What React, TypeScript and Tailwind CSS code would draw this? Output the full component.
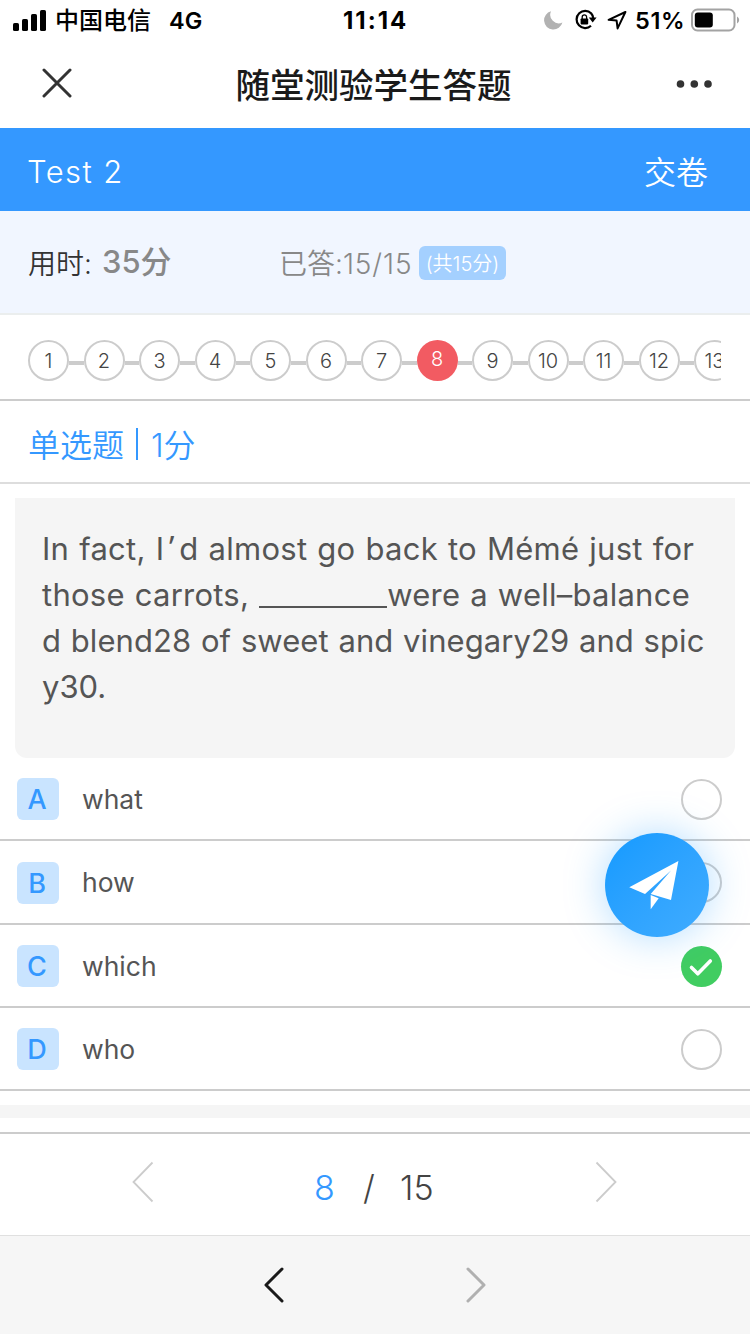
import { useState } from 'react'
import { clsx } from 'clsx'

const TOTAL = 15
const VISIBLE_STEPS = 13

const options = [
  { key: 'A', text: 'what', row: 'h-[83px] pt-5', label: 'leading-[43px]', radio: 'mt-px' },
  { key: 'B', text: 'how', row: 'h-[84px] pt-[21px]', label: 'leading-[41px]', radio: '' },
  { key: 'C', text: 'which', row: 'h-[83px] pt-5', label: 'leading-[43px]', radio: 'mt-px' },
  { key: 'D', text: 'who', row: 'h-[83px] pt-5', label: 'leading-[43px]', radio: 'mt-px' },
]

const questionLines = [
  { before: 'In fact, I', quote: true, text: 'd almost go back to Mémé just for', tracking: 'tracking-[0.27px]' },
  { text: 'those carrots, ', blank: true, rest: 'were a well–balance', tracking: 'tracking-[0.25px]' },
  { text: 'd blend28 of sweet and vinegary29 and spic', tracking: 'tracking-[0.06px]' },
  { text: 'y30.', tracking: 'tracking-[0px]' },
]

function StatusBar() {
  return (
    <div className="flex h-10 items-center text-black">
      <svg className="ml-[13px] h-[21px] w-[33px] shrink-0" viewBox="0 0 33 21">
        <rect x="0" y="13" width="6" height="8" rx="1.6" />
        <rect x="9" y="9" width="6" height="12" rx="1.6" />
        <rect x="18" y="4" width="6" height="17" rx="1.6" />
        <rect x="27" y="0" width="6" height="21" rx="1.6" />
      </svg>
      <span className="mt-0.5 ml-[9px] w-[114px] text-[24px] leading-10 font-medium whitespace-nowrap">中国电信</span>
      <span className="mt-0.5 w-[174px] text-[23.5px] leading-10 font-semibold tracking-[0.2px]">4G</span>
      <span className="mt-0.5 w-[199px] text-[24px] leading-10 font-bold tracking-[2px]">11:14</span>
      <svg className="ml-0.5 h-[19px] w-[19px] shrink-0" viewBox="0 0 19 19">
        <path d="M7 0.3A9.3 9.3 0 1 0 18.4 11.6A8.6 8.6 0 0 1 7 0.3Z" fill="#b2b2b2" />
      </svg>
      <svg className="ml-[11px] h-[22px] w-[23px] shrink-0" viewBox="0 0 23 22">
        <path d="M17.3 4.4A8.6 8.6 0 1 0 17 16.8" fill="none" stroke="#000" strokeWidth="2.2" />
        <path d="M17.1 4.3Q19 6.4 19.2 9" fill="none" stroke="#000" strokeWidth="2.2" />
        <path d="M14.8 8.6H22.6L18.7 13.4Z" />
        <rect x="6.6" y="9.4" width="7.6" height="6" rx="0.8" />
        <path d="M8.2 10V8a2.2 2.2 0 0 1 4.4 0v2" fill="none" stroke="#000" strokeWidth="1.3" />
      </svg>
      <svg className="ml-[10px] h-[20px] w-[20px] shrink-0" viewBox="0 0 20 20">
        <path d="M18.4 2L1.6 9.8L9.6 10.6L10.6 18.4Z" fill="none" stroke="#000" strokeWidth="2" strokeLinejoin="round" />
      </svg>
      <span className="mt-0.5 ml-[8px] w-[56px] text-[23.5px] leading-10 font-semibold tracking-[0.7px] whitespace-nowrap">51%</span>
      <svg className="h-[24px] w-[49px] shrink-0" viewBox="0 0 49 24">
        <rect x="1" y="1.5" width="42.5" height="21" rx="5.5" fill="none" stroke="#a3a3a3" strokeWidth="2" />
        <rect x="3.8" y="4.5" width="18" height="15" rx="3" />
        <path d="M46 8.5Q48.2 9.8 48.2 12T46 15.5Z" fill="#a3a3a3" />
      </svg>
    </div>
  )
}

function NavBar() {
  return (
    <div className="flex h-[88px] items-center justify-between pr-[38px] pl-[42px] text-[#1a1a1a]">
      <svg className="mt-[-2px] h-[30px] w-[30px]" viewBox="0 0 30 30">
        <path d="M2 2L28 28M28 2L2 28" stroke="#333" strokeWidth="3" strokeLinecap="round" />
      </svg>
      <h1 className="mt-[3px] mr-px text-[34.5px] leading-[85px] font-medium">随堂测验学生答题</h1>
      <svg className="mt-[-1px] h-2 w-9" viewBox="0 0 36 8">
        <circle cx="4.5" cy="4" r="3.8" fill="#333" />
        <circle cx="18.3" cy="4" r="3.8" fill="#333" />
        <circle cx="32" cy="4" r="3.8" fill="#333" />
      </svg>
    </div>
  )
}

function Steps({ current }: { current: number }) {
  return (
    <div className="h-[86px] border-b-2 border-[#ccc] px-7 pt-[25px]">
      <div className="flex w-[693px] overflow-hidden">
        {Array.from({ length: VISIBLE_STEPS }, (_, i) => i + 1).map((n) => (
          <div key={n} className="flex w-[55.5px] shrink-0 items-start">
            <div
              className={clsx(
                'flex h-[41px] w-[41px] shrink-0 justify-center rounded-full text-[20px] font-[350]',
                n === current
                  ? 'bg-[#f25b62] leading-[39px] text-white'
                  : 'border-2 border-[#ccc] leading-[38px] text-[#444]'
              )}
            >
              {n}
            </div>
            <div className="mt-[21px] h-1 flex-1 bg-[#ccc]" />
          </div>
        ))}
      </div>
    </div>
  )
}

function Radio({ checked, className }: { checked: boolean; className?: string }) {
  if (!checked) {
    return <span className={clsx('h-[41px] w-[41px] rounded-full border-2 border-[#ccc]', className)} />
  }
  return (
    <span className={clsx('h-[41px] w-[41px] rounded-full bg-[#41cd61]', className)}>
      <svg className="h-[41px] w-[41px]" viewBox="0 0 41 41">
        <path d="M10.5 21.5L16.8 27.8L29.3 15" fill="none" stroke="#fff" strokeWidth="3.6" strokeLinecap="round" strokeLinejoin="round" />
      </svg>
    </span>
  )
}

function SendButton() {
  return (
    <button className="absolute top-[833px] left-[605px] h-[104px] w-[104px] rounded-full bg-linear-to-br from-[#129aff] to-[#40acff] shadow-[0_0_40px_rgba(32,156,255,0.35)]">
      <svg className="h-[104px] w-[104px]" viewBox="0 0 104 104" fill="#fff">
        <path d="M73.4 28L24.3 54.3L40 61L66 37.5L45.7 61L66 67Z" />
        <path d="M45.7 62L53.7 65.3L45.7 76.3Z" />
      </svg>
    </button>
  )
}

function Chevron({ dir, className }: { dir: 'left' | 'right'; className: string }) {
  return (
    <svg className={className} viewBox="0 0 22 42" fill="none" stroke="currentColor" strokeWidth="1.8">
      <path d={dir === 'left' ? 'M20.5 1.5L1.5 21L20.5 40.5' : 'M1.5 1.5L20.5 21L1.5 40.5'} />
    </svg>
  )
}

function BrowserArrow({ dir, className }: { dir: 'left' | 'right'; className: string }) {
  return (
    <svg className={className} viewBox="0 0 20 36" fill="none" stroke="currentColor" strokeWidth="3" strokeLinecap="round" strokeLinejoin="round">
      <path d={dir === 'left' ? 'M18 2L2 18L18 34' : 'M2 2L18 18L2 34'} />
    </svg>
  )
}

export default function App() {
  const [current, setCurrent] = useState(8)
  const [answer, setAnswer] = useState('C')

  return (
    <div className="relative h-[1334px] w-[750px] overflow-hidden bg-white font-['Inter','Noto_Sans_CJK_SC',sans-serif]">
      <StatusBar />
      <NavBar />

      <div className="flex h-[83px] items-center justify-between bg-[#3498ff] pt-[5px] pr-[42px] pl-[27px] text-white">
        <span className="text-[31px] leading-[78px] font-[350] tracking-[1.4px]">Test 2</span>
        <span className="mt-0.5 text-[32px] leading-[76px] font-[350]">交卷</span>
      </div>

      <div className="flex h-[104px] items-center border-b-2 border-[#ebeeee] bg-[#f1f6ff] pt-0.5 pl-7 whitespace-nowrap">
        <span className="mt-0.5 w-[74px] text-[28px] font-[350] text-[#333]">用时:</span>
        <span className="mt-[-2px] w-[177px] text-[31px] font-medium text-[#888]">35分</span>
        <span className="mt-0.5 flex w-[140px] text-[28px] font-[350] text-[#888]">
          已答:<span className="tracking-[0.9px]">15/15</span>
        </span>
        <span className="flex h-[34px] w-[87px] items-center justify-center rounded-md bg-[#a4d0ff] pt-0.5 text-[20px] font-[350] text-white">
          (共15分)
        </span>
      </div>

      <Steps current={current} />

      <div className="flex h-[83px] items-center border-b-2 border-[#ddd] pt-[5px] pl-7 text-[#3498ff]">
        <span className="mt-[3px] text-[32px] leading-[73px] font-[350] whitespace-nowrap">单选题</span>
        <span className="mr-[13px] ml-[12px] h-8 w-0.5 bg-[#3498ff]" />
        <span className="mt-[3px] text-[32px] leading-[73px] font-[350]">1分</span>
      </div>

      <div className="mx-[15px] mt-[14px] h-[260px] rounded-b-xl bg-[#f5f5f5] pt-7 pl-[27px] text-[31px] leading-[46px] text-[#555]">
        {questionLines.map((line) => (
          <p key={line.text} className={clsx('flex h-[46px] whitespace-pre [word-spacing:1px]', line.tracking)}>
            {line.before}
            {line.quote && <span className="mt-[-3px] w-[15px] text-center font-['Noto_Sans',sans-serif]">’</span>}
            {line.text}
            {line.blank && <span className="mt-[34px] h-0.5 w-32 bg-[#555]" />}
            {line.rest}
          </p>
        ))}
      </div>

      {options.map((o) => (
        <div
          key={o.key}
          onClick={() => setAnswer(o.key)}
          className={clsx('flex items-start border-b-2 border-[#ccc] pr-7 pl-[17px]', o.row)}
        >
          <span className="flex h-[42px] w-[42px] justify-center rounded-md bg-[#c9e4ff] pr-0.5 text-[27px] leading-[43px] font-medium text-[#3498ff]">
            {o.key}
          </span>
          <span className={clsx('ml-[23px] flex-1 text-[26.5px] text-[#555]', o.label)}>{o.text}</span>
          <Radio checked={answer === o.key} className={o.radio} />
        </div>
      ))}

      <div className="mt-[14px] h-[13px] bg-[#f5f5f5]" />

      <div className="mt-[14px] flex h-[103px] items-center border-t-2 border-[#ccc] text-[34px] font-[350] text-[#444]">
        <button className="ml-[132px]" onClick={() => setCurrent(Math.max(1, current - 1))}>
          <Chevron dir="left" className="mt-[-5px] h-[42px] w-[22px] text-[#ccc]" />
        </button>
        <span className="mt-[6px] ml-[160px] w-[49px] text-[#3498ff]">{current}</span>
        <span className="mt-[6px] w-[37px]">/</span>
        <span className="mt-[6px] w-[195px]">{TOTAL}</span>
        <button onClick={() => setCurrent(Math.min(TOTAL, current + 1))}>
          <Chevron dir="right" className="mt-[-5px] h-[42px] w-[22px] text-[#ccc]" />
        </button>
      </div>

      <div className="flex h-[99px] items-center border-t border-[#e0e0e0] bg-[#f6f6f6]">
        <BrowserArrow dir="left" className="ml-[264px] h-9 w-5 text-[#1a1a1a]" />
        <BrowserArrow dir="right" className="ml-[182px] h-9 w-5 text-[#b0b0b0]" />
      </div>

      <SendButton />
    </div>
  )
}
